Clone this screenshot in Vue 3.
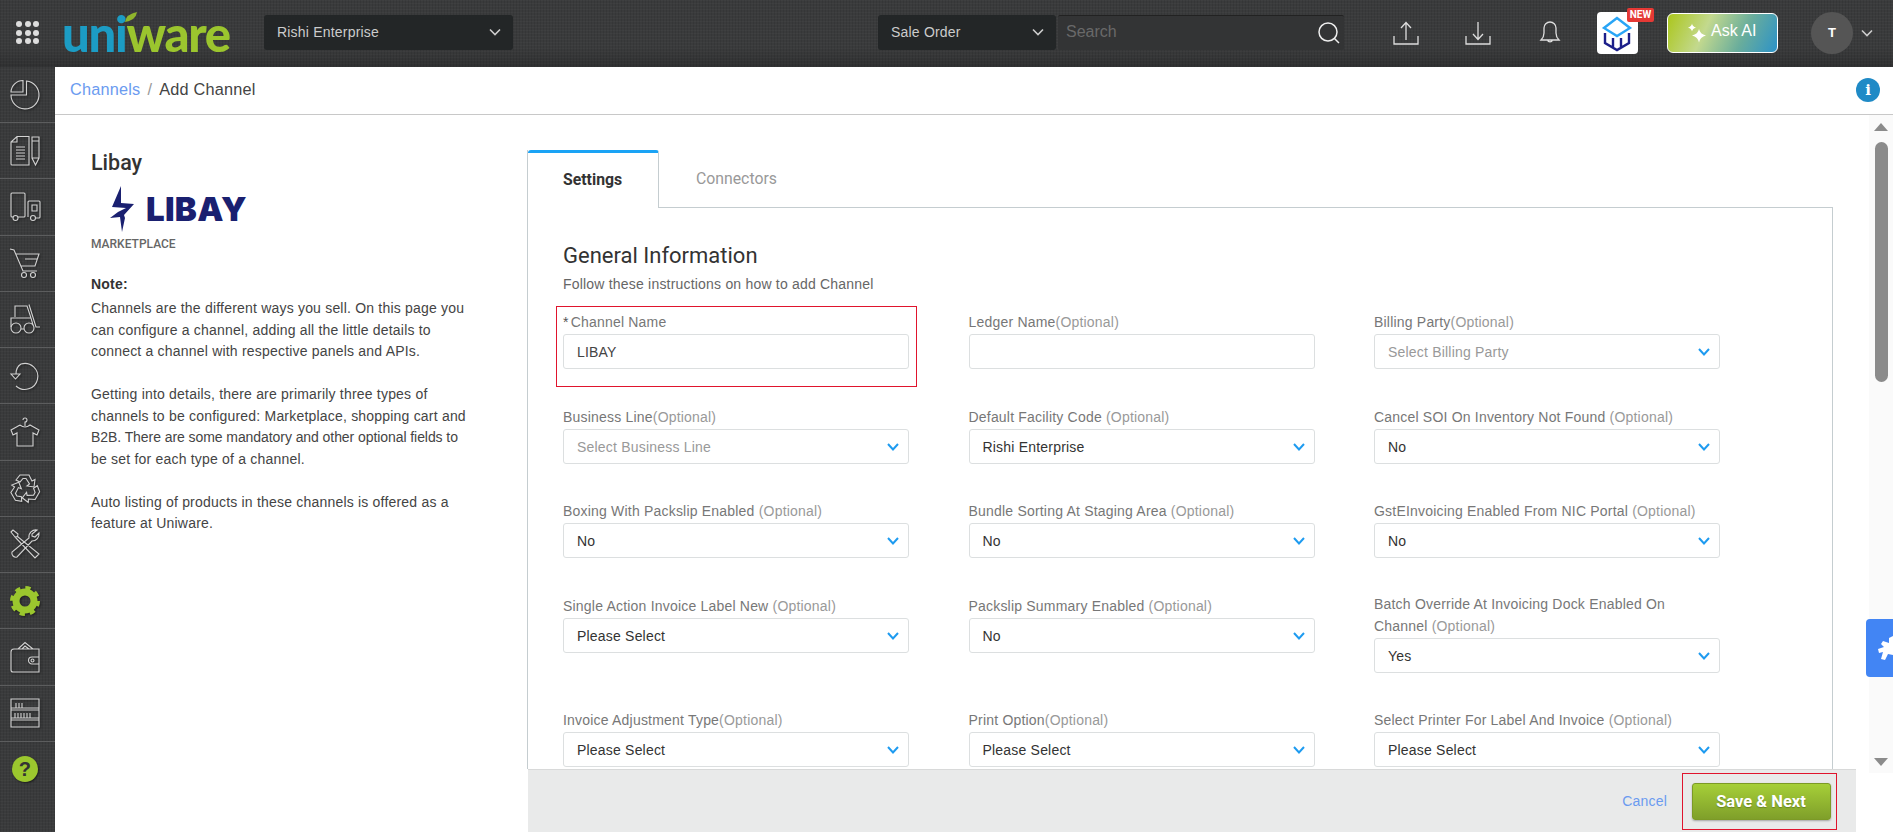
<template>
  <div class="page">
    <header class="topbar">
      <div class="apps"><span v-for="n in 9" :key="n"></span></div>
      <div class="brand">
        <span class="brand-uni">uni</span><span class="brand-ware">ware</span>
        <svg class="brand-leaf" viewBox="0 0 14 12"><path d="M1 11 Q2 3 13 1 Q12 9 1 11Z" fill="#8fb52c" /></svg>
      </div>
      <div class="dark-select company">
        <span>Rishi Enterprise</span>
        <svg class="chev" viewBox="0 0 12 8"><path d="M1 1.5 L6 6.5 L11 1.5" /></svg>
      </div>
      <div class="dark-select order">
        <span>Sale Order</span>
        <svg class="chev" viewBox="0 0 12 8"><path d="M1 1.5 L6 6.5 L11 1.5" /></svg>
      </div>
      <div class="search">
        <span class="search-ph">Search</span>
        <svg viewBox="0 0 24 24" width="24" height="24"><circle cx="11" cy="11" r="9" /><path d="M17.5 17.5 L22 22" /></svg>
      </div>
      <svg class="top-icon upload" viewBox="0 0 26 24" width="26" height="24"><path d="M1 15 V23 H25 V15 M13 19 V2 M8 7 L13 1.5 L18 7" /></svg>
      <svg class="top-icon download" viewBox="0 0 26 24" width="26" height="24"><path d="M1 15 V23 H25 V15 M13 1 V18 M8 13 L13 18.5 L18 13" /></svg>
      <svg class="top-icon bell" viewBox="0 0 22 26" width="22" height="26"><path d="M2 20 Q5 17 5 13 V8 A6 6 0 0 1 17 8 V13 Q17 17 20 20 Z M8.5 20 A2.6 2.6 0 0 0 13.5 20" /></svg>
      <div class="news-tile">
        <svg viewBox="0 0 41 42" width="41" height="42">
          <path d="M20 6 L7 16 L20 24 L33 16 Z" fill="none" stroke="#29a5f6" stroke-width="2.4" />
          <path d="M8 21 V31 L20 38 L32 31 V21 M16 26 V36 M24 26 V36" fill="none" stroke="#1c1f8a" stroke-width="2.4" />
        </svg>
        <span class="new-badge">NEW</span>
      </div>
      <div class="ask-ai">
        <svg viewBox="0 0 20 20" width="20" height="20"><path d="M12 6 Q13 11 19 12.500 Q13 14 12 19.500 Q11 14 5 12.500 Q11 11 12 6Z M5 0.500 Q5.500 3.500 9 4.500 Q5.500 5.500 5 8.500 Q4.500 5.500 1 4.500 Q4.500 3.500 5 0.500Z" fill="#fff" /></svg>
        <span class="ask-label">Ask AI</span>
      </div>
      <div class="avatar">T</div>
      <svg class="chev avatar-chev" viewBox="0 0 12 8"><path d="M1 1.5 L6 6.5 L11 1.5" /></svg>
    </header>

    <div class="body">
      <nav class="sidenav">
        <div class="nav-item">
          <svg viewBox="0 0 30 30"><path d="M1 12 A12 12 0 0 1 13 0.500 V12 Z M16.500 1 A14 14 0 1 1 1 15 H16.500 Z" /></svg>
        </div>
        <div class="nav-item">
          <svg viewBox="0 0 30 30"><path d="M7 0.500 H19 V29 H2 Q1 29 1 28 V6 Z M7 0.500 V6 H1 M6 11 H15 M6 14 H15 M6 17 H15 M6 20 H15 M6 23 H15 M22 1 H29 V22 L25.500 29 L22 22 Z M22 5 H29 M22 22 H29" /></svg>
        </div>
        <div class="nav-item">
          <svg viewBox="0 0 30 30"><path d="M3 25 H2 Q1 25 1 24 V2 Q1 1 2 1 H14 Q15 1 15 2 V24 Q15 25 14 25 H8 M18 25 V10 Q18 9 19 9 H29 Q30 9 30 10 V25 Q30 26 29 26 H26 M22 13 H27 V19 H22 Z" /><circle cx="5.500" cy="26" r="2.500" /><circle cx="23" cy="26" r="2.500" /></svg>
        </div>
        <div class="nav-item">
          <svg viewBox="0 0 30 30"><path d="M0 1 L4 2 L13 23 H27 M6 6 H29 L25 18 H11 M15 11 H27" /><circle cx="14" cy="27" r="2.500" /><circle cx="23" cy="27" r="2.500" /></svg>
        </div>
        <div class="nav-item">
          <svg viewBox="0 0 30 30"><path d="M5 13 V2 H17 L21 14 M1 23 V14 H21 L23 21 M19 0.500 L26 23 H30 M11 25 H14" /><circle cx="6" cy="24" r="5" /><circle cx="19" cy="24" r="5" /></svg>
        </div>
        <div class="nav-item">
          <svg viewBox="0 0 30 30"><path d="M6 13 Q6 6 11 3 A13 13 0 1 1 6 25 M1 13 H10 L5.500 18 Z" /></svg>
        </div>
        <div class="nav-item">
          <svg viewBox="0 0 30 30"><path d="M10 8 L1 13 L3 18 L7 16 V29 H23 V16 L27 18 L29 13 L20 8 Q15 12 10 8 M15 9 V5 A2 2 0 1 0 13 3" /></svg>
        </div>
        <div class="nav-item">
          <svg viewBox="0 0 30 30">
            <g v-for="a in [0, 120, 240]" :key="a" :transform="`rotate(${a} 15 16)`">
              <path d="M10 2 H19 L22 8 L25 6.500 L24 14 L17 13 L19.500 11 L16 5.500 H13 L10 9 L6 7 Z" />
            </g>
          </svg>
        </div>
        <div class="nav-item">
          <svg viewBox="0 0 30 30"><path d="M1 3 L3 1 L8 5 L7.500 7.500 L5 8 Z M7.500 7.500 L29 25 L25 29 L5 8 M27 1 A7 7 0 0 0 19 9 L2 23 A4 4 0 0 0 7 28 L22 12 A7 7 0 0 0 29 4 L25 8 L22 7 L22 5 Z" /></svg>
        </div>
        <div class="nav-item">
          <svg viewBox="0 0 30 30"><circle class="gear-ring" cx="15" cy="15" r="9" /><circle class="gear-teeth" cx="15" cy="15" r="13" /></svg>
        </div>
        <div class="nav-item">
          <svg viewBox="0 0 30 30"><path d="M8 7 L15 0.500 L23 7 M12 7 L15 4 L19 7 M4 7 H29 V30 H3 Q1 30 1 28 V10 Q1 7 4 7 M29 15 H22 A3.500 3.500 0 0 0 22 22 H29" /><circle cx="22.500" cy="18.500" r="1.500" /></svg>
        </div>
        <div class="nav-item">
          <svg viewBox="0 0 30 30"><path d="M1 1 H29 V29 H1 Z M1 10 H29 M1 12 H29 M1 20 H29 M1 22 H29 M6 5 V10 M9 5 V10 M12 5 V10 M5 15 V20 M8 15 V20 M11 15 V20 M14 15 V20 M17 15 V20 M20 15 V20" /></svg>
        </div>
        <div class="nav-item">
          <div class="help">?</div>
        </div>
      </nav>

      <main class="main">
        <div class="crumbs">
          <span class="crumb-link">Channels</span>
          <span class="crumb-sep">/</span>
          <span class="crumb-now">Add Channel</span>
          <span class="info">i</span>
        </div>

        <div class="content">
          <aside class="side">
            <h2 class="side-title">Libay</h2>
            <div class="libay">
              <svg viewBox="0 0 24 46" width="24" height="46"><path d="M11 0 L11 17 L24 18 L14 29 L15 32 L12 46 L10 31 L0 32 L8 26 L16 22 L2 21 Z" fill="#1a2070" /></svg>
              <span>LIBAY</span>
            </div>
            <div class="side-type">MARKETPLACE</div>
            <div class="note-head">Note:</div>
            <p class="note">
              Channels are the different ways you sell. On this page you can configure a channel, adding all the little details to connect a channel with respective panels and APIs.
            </p>
            <p class="note">
              Getting into details, there are primarily three types of channels to be configured: Marketplace, shopping cart and <span class="tight">B2B. There are some mandatory and other optional fields to</span> be set for each type of a channel.
            </p>
            <p class="note">
              Auto listing of products in these channels is offered as a feature at Uniware.
            </p>
          </aside>

          <section class="editor">
            <div class="panel">
              <div class="tabs">
                <div class="tab active">Settings</div>
                <div class="tab">Connectors</div>
              </div>
              <div class="form">
                <h3 class="form-title">General Information</h3>
                <div class="form-sub">Follow these instructions on how to add Channel</div>
                <div class="grid">
                  <div v-for="f in fields" :key="f.label" class="field" :class="{ tall: f.tall }">
                    <label>
                      <span v-if="f.required" class="req">*</span>{{ f.label }}<span v-if="f.opt" class="opt">{{ f.opt }}</span>
                    </label>
                    <div v-if="f.input !== undefined" class="box">{{ f.input }}</div>
                    <div v-else class="box pick" :class="{ empty: f.ph }">
                      <span>{{ f.ph || f.value }}</span>
                      <svg viewBox="0 0 12 8" width="12" height="8"><path d="M1 1 L6 6.500 L11 1" /></svg>
                    </div>
                    <div v-if="f.required" class="mark"></div>
                  </div>
                </div>
              </div>
            </div>
            <div class="footer">
              <span class="cancel">Cancel</span>
              <div class="save-mark"><button class="save" type="button">Save &amp; Next</button></div>
            </div>
          </section>

          <div class="scrollbar">
            <i class="arrow-up"></i>
            <div class="thumb"></div>
            <i class="arrow-down"></i>
          </div>
        </div>

        <div class="side-tab">
          <svg viewBox="0 0 15 26" width="15" height="26"><path d="M15 1 L11 3 V8 L5 6 L3 9 L6 12 L0 14 L1 18 L5 17 L3 24 L7 25 L10 19 L15 20 Z" fill="#fff" /></svg>
        </div>
      </main>
    </div>
  </div>
</template>

<script setup>
const O = '(Optional)'
const fields = [
  { label: 'Channel Name', required: true, input: 'LIBAY' },
  { label: 'Ledger Name', opt: O, input: '' },
  { label: 'Billing Party', opt: O, ph: 'Select Billing Party' },
  { label: 'Business Line', opt: O, ph: 'Select Business Line' },
  { label: 'Default Facility Code ', opt: O, value: 'Rishi Enterprise' },
  { label: 'Cancel SOI On Inventory Not Found ', opt: O, value: 'No' },
  { label: 'Boxing With Packslip Enabled ', opt: O, value: 'No' },
  { label: 'Bundle Sorting At Staging Area ', opt: O, value: 'No' },
  { label: 'GstEInvoicing Enabled From NIC Portal ', opt: O, value: 'No' },
  { label: 'Single Action Invoice Label New ', opt: O, value: 'Please Select' },
  { label: 'Packslip Summary Enabled ', opt: O, value: 'No' },
  { label: 'Batch Override At Invoicing Dock Enabled On Channel ', opt: O, value: 'Yes', tall: true },
  { label: 'Invoice Adjustment Type', opt: O, value: 'Please Select' },
  { label: 'Print Option', opt: O, value: 'Please Select' },
  { label: 'Select Printer For Label And Invoice ', opt: O, value: 'Please Select' }
]
</script>

<style>
html, body {
  margin: 0;
  height: 100%;
  overflow: hidden;
  background: #fff;
}
</style>

<style scoped>
.page {
  width: 1893px;
  height: 832px;
  display: flex;
  flex-direction: column;
  overflow: hidden;
  font-family: "Liberation Sans", Arial, sans-serif;
  font-size: 14px;
  letter-spacing: 0.2px;
  color: #444;
  background:
    repeating-linear-gradient(0deg, rgba(255,255,255,0.025) 0 1px, transparent 1px 3px),
    repeating-linear-gradient(90deg, rgba(0,0,0,0.09) 0 1px, transparent 1px 3px),
    #3a3b3c;
}

/* top bar */
.topbar {
  height: 67px;
  flex: none;
  display: flex;
  align-items: center;
  padding: 0 20px 2px 16px;
  box-sizing: border-box;
  background: linear-gradient(to bottom, rgba(0,0,0,0) 70%, rgba(0,0,0,0.18));
}
.apps {
  width: 23px;
  display: grid;
  grid-template-columns: repeat(3, 6px);
  gap: 2.500px;
}
.apps span {
  width: 6px;
  height: 6px;
  border-radius: 50%;
  background: #ddd;
}
.brand {
  position: relative;
  width: 170px;
  margin-left: 23px;
  font-family: Lato, sans-serif;
  font-weight: 900;
  font-size: 49px;
  line-height: 40px;
  letter-spacing: -1.300px;
  white-space: nowrap;
}
.brand-uni { color: #1c9cc4; }
.brand-ware { color: #9bc52e; }
.brand-leaf {
  position: absolute;
  left: 62px;
  top: -2px;
  width: 14px;
  height: 12px;
}
.dark-select {
  height: 35px;
  box-sizing: border-box;
  display: flex;
  align-items: center;
  justify-content: space-between;
  padding: 0 12px 2px 13px;
  background: #232627;
  border-radius: 3px;
  color: #ccc;
  font-size: 14px;
}
.company {
  width: 249px;
  margin-left: 32px;
}
.order {
  width: 178px;
  margin-left: auto;
}
.chev {
  width: 12px;
  height: 8px;
  fill: none;
  stroke: #ccc;
  stroke-width: 1.600;
}
.search {
  width: 286px;
  height: 35px;
  margin-left: 2px;
  box-sizing: border-box;
  display: flex;
  align-items: center;
  justify-content: space-between;
  padding: 0 3px 0 8px;
  background: #333435;
  border-top: 1px solid #222;
  border-radius: 2px;
}
.search svg {
  fill: none;
  stroke: #eee;
  stroke-width: 1.500;
}
.search-ph {
  color: #696969;
  font-size: 16px;
  letter-spacing: 0;
  padding-bottom: 2px;
}
.top-icon {
  flex: none;
  fill: none;
  stroke: #ddd;
  stroke-width: 1.300;
}
.upload { margin-left: 49px; }
.download { margin-left: 46px; }
.bell { margin-left: 48px; }
.news-tile {
  position: relative;
  width: 41px;
  height: 42px;
  margin-left: 36px;
  background: #fff;
  border-radius: 4px;
}
.new-badge {
  position: absolute;
  left: 30px;
  top: -4px;
  width: 27px;
  height: 14px;
  background: #e53935;
  border-radius: 2px;
  color: #fff;
  font-family: Roboto, sans-serif;
  font-weight: 700;
  font-size: 10px;
  line-height: 14px;
  letter-spacing: 0;
  text-align: center;
}
.ask-ai {
  width: 111px;
  height: 40px;
  margin-left: 29px;
  box-sizing: border-box;
  display: flex;
  align-items: center;
  padding-left: 19px;
  gap: 4px;
  border: 1px solid #fff;
  border-radius: 6px;
  background: linear-gradient(115deg, #abc61c 0%, #c3d98e 35%, #69ad9c 68%, #2c92c8 100%);
  color: #fff;
  font-size: 16px;
  letter-spacing: 0;
}
.ask-label {
  padding-bottom: 3px;
}
.avatar {
  width: 42px;
  height: 42px;
  margin-left: 33px;
  border-radius: 50%;
  background: #555;
  color: #fff;
  font-weight: 700;
  font-size: 13px;
  line-height: 42px;
  text-align: center;
}
.avatar-chev {
  margin-left: 8px;
}

.body {
  flex: 1;
  display: flex;
  min-height: 0;
}

/* side nav */
.sidenav {
  width: 55px;
  flex: none;
}
.nav-item {
  height: 56.250px;
  box-sizing: border-box;
  display: flex;
  align-items: center;
  justify-content: center;
  padding-right: 5px;
  border-top: 1px solid #5c5d5e;
}
.nav-item:first-child {
  height: 55px;
  border-top: 0;
}
.nav-item svg {
  width: 30px;
  height: 30px;
  fill: none;
  stroke: #d2d2d2;
  stroke-width: 1.100;
  overflow: visible;
  filter: drop-shadow(1px 1px 1px rgba(0,0,0,0.5));
}
.gear-ring {
  stroke: #9bc72e;
  stroke-width: 7;
}
.gear-teeth {
  stroke: #9bc72e;
  stroke-width: 4;
  stroke-dasharray: 5.200 5;
}
.help {
  width: 26px;
  height: 26px;
  border-radius: 50%;
  background: #9bc72e;
  color: #333;
  font-weight: 700;
  font-size: 20px;
  line-height: 26px;
  text-align: center;
  box-shadow: 1px 1px 2px rgba(0,0,0,0.5);
}

/* main */
.main {
  position: relative;
  flex: 1;
  min-width: 0;
  display: flex;
  flex-direction: column;
  background: #fff;
}
.crumbs {
  height: 48px;
  flex: none;
  box-sizing: border-box;
  display: flex;
  align-items: center;
  gap: 7px;
  padding: 0 13px 2px 15px;
  border-bottom: 1px solid #c8c8c8;
  font-size: 16.300px;
}
.crumb-link { color: #6b9bf0; }
.crumb-sep { color: #999; }
.crumb-now { color: #444; }
.info {
  width: 24px;
  height: 24px;
  margin-left: auto;
  border-radius: 50%;
  background: #1f8ac6;
  color: #fff;
  font-family: "DejaVu Serif", serif;
  font-weight: 700;
  font-size: 15px;
  line-height: 24px;
  letter-spacing: 0;
  text-align: center;
}
.content {
  flex: 1;
  min-height: 0;
  display: flex;
}

.side {
  width: 472px;
  flex: none;
  box-sizing: border-box;
  padding: 34px 60px 0 36px;
}
.side-title {
  margin: 0;
  padding-top: 1px;
  font-family: Roboto, sans-serif;
  font-weight: 500;
  font-size: 21.500px;
  line-height: 26px;
  letter-spacing: 0;
  color: #333;
}
.libay {
  display: flex;
  align-items: center;
  gap: 12px;
  margin: 10px 0 0 19px;
}
.libay span {
  font-family: Inter, sans-serif;
  font-weight: 900;
  font-size: 33px;
  line-height: 46px;
  letter-spacing: 0.300px;
  color: #1a2070;
}
.side-type {
  margin-top: 4px;
  font-family: Roboto, sans-serif;
  font-weight: 500;
  font-size: 12px;
  line-height: 16px;
  letter-spacing: 0;
  color: #666;
}
.note-head {
  margin-top: 22px;
  margin-bottom: 3px;
  font-weight: 700;
  line-height: 21px;
  color: #333;
}
.note {
  margin: 0 0 21.500px;
  line-height: 21.500px;
}
.tight {
  letter-spacing: -0.070px;
}

.editor {
  width: 1329px;
  flex: none;
  display: flex;
  flex-direction: column;
  min-height: 0;
}
.panel {
  flex: 1;
  min-height: 0;
  overflow: hidden;
  width: 1306px;
  margin-top: 35px;
  box-sizing: border-box;
  border-left: 1px solid #c5cdd0;
}
.tabs {
  height: 58px;
  display: flex;
  box-sizing: border-box;
  border-bottom: 1px solid #c5cdd0;
  font-family: Roboto, sans-serif;
  font-size: 15.800px;
  letter-spacing: 0;
}
.tab {
  color: #999;
  padding: 19px 35px 0 37px;
  line-height: 20px;
}
.tab.active {
  width: 131px;
  height: 58px;
  box-sizing: border-box;
  padding-top: 17px;
  padding-left: 35px;
  background: #fff;
  border-top: 3px solid #1aa3f5;
  border-right: 1px solid #c5cdd0;
  border-radius: 3px 3px 0 0;
  color: #333;
  font-weight: 700;
}
.form {
  height: 100%;
  padding: 33px 0 0 35px;
  border-right: 1px solid #c5cdd0;
}
.form-title {
  margin: 0;
  font-family: Roboto, sans-serif;
  font-weight: 400;
  font-size: 22px;
  line-height: 30px;
  letter-spacing: 0;
  color: #333;
}
.form-sub {
  margin-top: 3px;
  line-height: 20px;
  color: #666;
}
.grid {
  display: grid;
  grid-template-columns: repeat(3, 346px);
  column-gap: 59.500px;
  row-gap: 36.500px;
  align-items: start;
  margin-top: 17px;
}
.field {
  position: relative;
}
.field label {
  display: block;
  min-height: 23px;
  line-height: 22px;
  color: #777;
}
.field.tall label {
  margin-top: -2px;
  margin-bottom: 1px;
  width: 320px;
}
.req {
  margin-right: 2px;
  color: #555;
}
.opt {
  color: #999;
}
.box {
  height: 35px;
  box-sizing: border-box;
  display: flex;
  align-items: center;
  justify-content: space-between;
  padding: 0 9px 0 13px;
  background: #fff;
  border: 1px solid #dcdfe0;
  border-radius: 3px;
  color: #444;
}
.pick {
  padding-top: 1px;
  color: #333;
}
.pick svg {
  fill: none;
  stroke: #1e9bf0;
  stroke-width: 2;
}
.pick.empty {
  color: #999;
}
.mark {
  position: absolute;
  top: -5px;
  right: -8px;
  bottom: -18px;
  left: -7px;
  border: 1px solid #e0142d;
  pointer-events: none;
}
.footer {
  height: 63px;
  flex: none;
  margin-left: 1px;
  box-sizing: border-box;
  display: flex;
  align-items: center;
  justify-content: flex-end;
  gap: 15px;
  padding-right: 19.500px;
  background: #e9eaea;
  border-top: 1px solid #d8d9d9;
}
.cancel {
  color: #6b9bf0;
}
.save-mark {
  padding: 9px 5px 9px 8.500px;
  border: 1px solid #e0142d;
}
.save {
  display: block;
  width: 139px;
  height: 37px;
  border: 1px solid #7c9a26;
  border-radius: 3px;
  background: linear-gradient(to bottom, #a6cf38, #7f9f2a);
  color: #fff;
  font-family: Roboto, sans-serif;
  font-weight: 700;
  font-size: 16.500px;
  letter-spacing: 0;
  box-shadow: 0 1px 2px rgba(0,0,0,0.3);
  text-shadow: 0 1px 1px rgba(0,0,0,0.25);
}

/* scroll strip */
.scrollbar {
  width: 24px;
  height: 658px;
  margin-left: 13px;
  flex: none;
  box-sizing: border-box;
  display: flex;
  flex-direction: column;
  align-items: center;
  padding-top: 8px;
  background: #fafafa;
}
.thumb {
  width: 13px;
  height: 240px;
  margin-top: 11px;
  border-radius: 7px;
  background: #8b8b8b;
}
.arrow-up,
.arrow-down {
  width: 0;
  height: 0;
  border-left: 7.500px solid transparent;
  border-right: 7.500px solid transparent;
}
.arrow-up { border-bottom: 8px solid #8b8b8b; }
.arrow-down {
  margin-top: auto;
  margin-bottom: 7px;
  border-top: 8px solid #8b8b8b;
}
.side-tab {
  position: absolute;
  top: 552px;
  right: 0;
  width: 27px;
  height: 58px;
  display: flex;
  align-items: center;
  justify-content: flex-end;
  background: #4285f4;
  border-radius: 4px 0 0 4px;
}
</style>
